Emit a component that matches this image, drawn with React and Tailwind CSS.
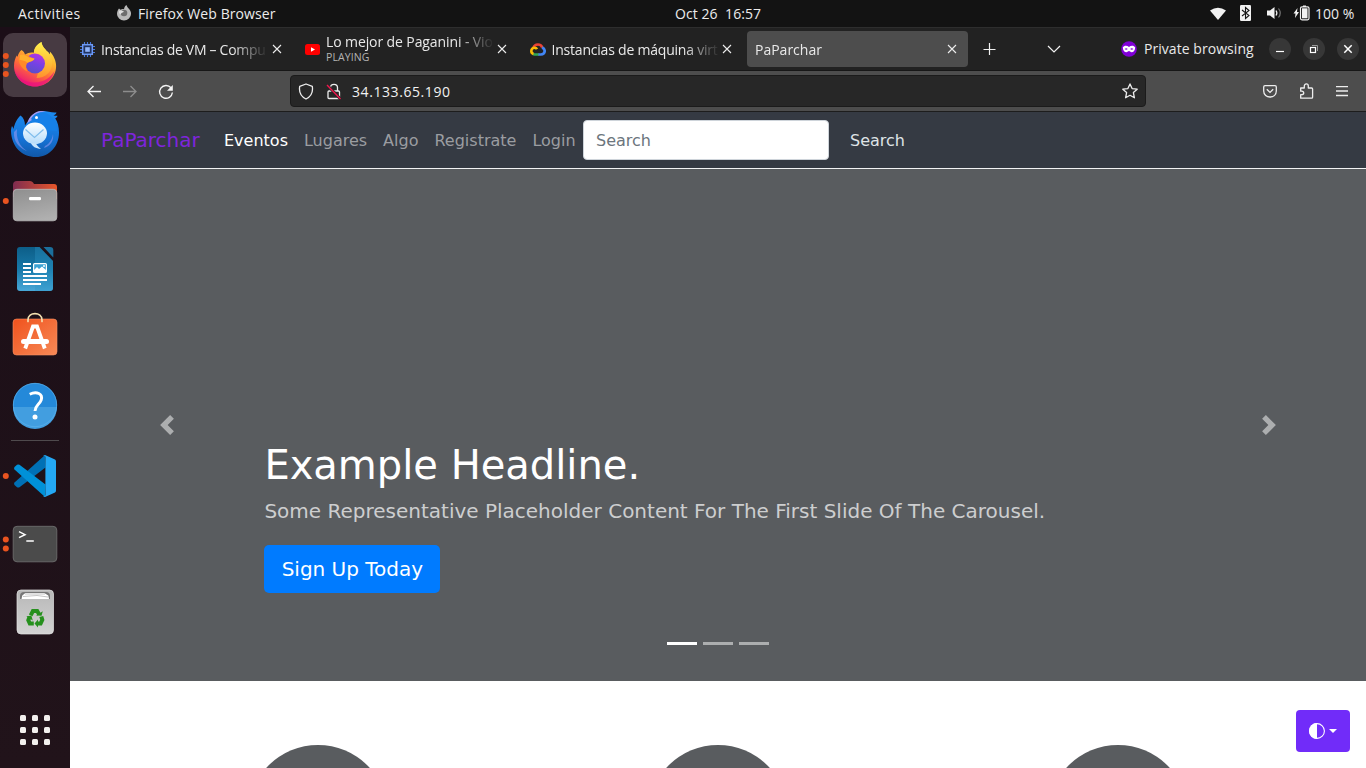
import React from "react";

const ui = "font-['Open_Sans','Noto_Sans',sans-serif]";

function Cell({ children, dots = 0 }) {
  const start = 34 - ((dots - 1) * 9) / 2;
  return (
    <svg width="70" height="68" viewBox="0 0 70 68" className="block shrink-0">
      {children}
      {Array.from({ length: dots }, (_, i) => (
        <circle key={i} cx="5.8" cy={start + i * 9} r="3" fill="#e95420" />
      ))}
    </svg>
  );
}

function FirefoxDock() {
  return (
    <Cell dots={3}>
      <defs>
        <linearGradient id="ffBody" x1="0.8" y1="0" x2="0.3" y2="1">
          <stop offset="0" stopColor="#fff44f" />
          <stop offset="0.35" stopColor="#ffb52e" />
          <stop offset="0.65" stopColor="#ff6a3a" />
          <stop offset="1" stopColor="#e90f7c" />
        </linearGradient>
        <linearGradient id="ffGlobe" x1="0.7" y1="0" x2="0.3" y2="1">
          <stop offset="0" stopColor="#b833e1" />
          <stop offset="0.5" stopColor="#7542e5" />
          <stop offset="1" stopColor="#5a4fc4" />
        </linearGradient>
        <linearGradient id="ffTail" x1="0" y1="0" x2="0" y2="1">
          <stop offset="0" stopColor="#fff44f" />
          <stop offset="1" stopColor="#ff9a2a" />
        </linearGradient>
      </defs>
      <rect x="3" y="2" width="64" height="64" rx="10" fill="#473a42" />
      <path d="M21.5 19c2 1 3 3 3.500 4.500 3-2 6-2.500 9-1.800C33.800 17 37 13.500 41.500 11c.3 4 3.500 6.500 5.500 9.500 1.300-.2 2.200 2 2.500 3 .6-1 .5-2.300.3-3 4 4 6.300 9.500 6.300 14.500 0 11.500-9.500 20.500-21 20.500S14 46.500 14 35c0-5 1.500-8.500 2.800-10.500.4.500.6 1 .7 1.500.8-3 2-5.500 4-7z" fill="url(#ffBody)" />
      <path d="M33.800 22C34 17 37 13.500 41.500 11c.3 5 5 8 8 12 4 6 3.500 14-1 19-4 4-8 5-12 5l6-20z" fill="url(#ffTail)" opacity=".85" />
      <circle cx="35" cy="32.500" r="10" fill="url(#ffGlobe)" />
      <path d="M18.500 28c2-3.500 6-5 9.500-3.500 2 2 5 2 6.500 3-1 3-5.500 3-7.500 5-1.500 2-1 5 .5 8-5-2-8.500-7-9-12.500z" fill="#ff8a28" />
      <path d="M20 24c3-1 7 .5 9 2.500l5.500 1.200c-1 2.500-5 2.800-7 4-2-2.200-5-2-8-3z" fill="#ffb02c" />
      <path d="M14.300 38c2 8 10 13.500 20 13.500S51 46 54.500 40c-2 9-10 15.500-19.500 15.500S15.500 48 14.300 38z" fill="#e8127e" opacity=".7" />
    </Cell>
  );
}

function ThunderbirdDock() {
  return (
    <Cell>
      <defs>
        <linearGradient id="tbBody" x1="0.5" y1="0" x2="0.5" y2="1">
          <stop offset="0" stopColor="#1c8bf0" />
          <stop offset="0.6" stopColor="#1573d8" />
          <stop offset="1" stopColor="#1158a8" />
        </linearGradient>
        <linearGradient id="tbMail" x1="0" y1="0" x2="0" y2="1">
          <stop offset="0" stopColor="#ffffff" />
          <stop offset="1" stopColor="#b5dcfb" />
        </linearGradient>
      </defs>
      <path d="M20.500 16.500c3 2 4.500 6 4.500 10 1-2 2-3 3-4 2-6 8-10.500 14.500-10.500 5 0 9 2 14 1.500-.5 2-2 2.500-3 2.800 1.500.6 3 .6 4 .4-.3 1.700-1.500 2.300-2.300 2.500 2.500 4 3.800 8.500 3.800 14.300C59 47.500 49 58 36 58 22 58 11.500 48 11 32c0-2 .5-4 1-5 .8 1 1.200 2 1.500 3 1-5 3.500-10.500 7-13.500z" fill="url(#tbBody)" />
      <path d="M27 25c2-8 8-12.500 14-13l5 .5c-6 .5-10 3-11.500 6-2 3-5 3-7.500 6.500z" fill="#a99bf0" />
      <path d="M31 20c3-6 10-8 15-6 7 3 11 10 11 18l-10-1-14-9z" fill="#1680e8" />
      <path d="M17 30c-1 9 2 17 10 22-8-3-14-10-13-19zM45 47c4-2 7-6 8-12 1 6-2 12-9 14z" fill="#8795ee" opacity=".65" />
      <ellipse cx="35" cy="34.300" rx="12" ry="10.800" fill="url(#tbMail)" />
      <path d="M25.500 30.500l9 8 9-8" fill="none" stroke="#80bdec" strokeWidth="1.200" />
      <path d="M31 44c1 3.500 5 5.500 10 6-2-1.500-4-3.500-5-5.500z" fill="#c9e5fc" />
      <circle cx="36.500" cy="18.500" r="1.500" fill="#fff" />
    </Cell>
  );
}

function FilesDock() {
  return (
    <Cell dots={1}>
      <defs>
        <linearGradient id="fBack" x1="0" x2="1" y1="0" y2="0">
          <stop offset="0" stopColor="#7f2c50" />
          <stop offset="1" stopColor="#e8562a" />
        </linearGradient>
        <linearGradient id="fFront" x1="0.300" x2="0.600" y1="0" y2="1">
          <stop offset="0" stopColor="#919191" />
          <stop offset="1" stopColor="#b0b0b0" />
        </linearGradient>
      </defs>
      <path d="M13 30V18q0-4 4-4h13q2 0 3 1.500l1 1.500h20q3 0 3 3v12z" fill="url(#fBack)" />
      <rect x="13.300" y="22.300" width="43.500" height="31.500" rx="3.500" fill="url(#fFront)" stroke="#bdbdbd" strokeWidth=".8" />
      <rect x="29" y="30" width="12" height="3.200" rx="1.200" fill="#fff" />
    </Cell>
  );
}

function WriterDock() {
  return (
    <Cell>
      <defs>
        <linearGradient id="wr" x1="0" x2="0" y1="0" y2="1">
          <stop offset="0" stopColor="#0d5e88" />
          <stop offset=".5" stopColor="#1778a8" />
          <stop offset="1" stopColor="#48a8d8" />
        </linearGradient>
      </defs>
      <path d="M20 12h19.500L53 26v27q0 3-3 3H20q-3 0-3-3V15q0-3 3-3z" fill="url(#wr)" />
      <path d="M35 12h4.500L53 26v27q0 3-3 3H35z" fill="#2e94c7" opacity=".35" />
      <path d="M43.500 12H50q3.300 0 3.300 3v7.500z" fill="#1b6f9c" />
      <path d="M23 29h8M23 33h8M23 37h8M23 41h24M23 45h24M23 49h18" stroke="#fff" strokeWidth="2" />
      <rect x="33.600" y="28.600" width="12.800" height="8.800" rx="1" fill="#3ba2d3" stroke="#fff" strokeWidth="1.200" />
      <path d="M34 37v-2l3-3 2 2 3-2.500 4 3.500v2z" fill="#fff" />
      <circle cx="44" cy="31" r="1" fill="#fff" />
    </Cell>
  );
}

function SoftwareDock() {
  return (
    <Cell>
      <defs>
        <linearGradient id="sw" x1="0" x2="1" y1="0" y2="1">
          <stop offset="0" stopColor="#f0521d" />
          <stop offset="1" stopColor="#f78a57" />
        </linearGradient>
      </defs>
      <rect x="13" y="16" width="44" height="36" rx="3.500" fill="url(#sw)" stroke="#f69065" strokeWidth=".6" />
      <path d="M28 18.500V17c0-8.500 14-8.500 14 0v1.500" fill="none" stroke="#f4dfaf" strokeWidth="1.700" strokeLinecap="round" />
      <path d="M25.200 45.500L33 23.500h4L44.800 45.500" fill="none" stroke="#fff" strokeWidth="3.800" />
      <rect x="21" y="36" width="28" height="5" rx="2.500" fill="#fff" />
    </Cell>
  );
}

function HelpDock() {
  return (
    <Cell>
      <circle cx="35" cy="35" r="22" fill="#2489d9" />
      <path d="M13 37h44a22 22 0 0 1-44 0z" fill="#429ee0" />
      <circle cx="35" cy="35" r="21.700" fill="none" stroke="#5cb2ed" strokeWidth=".7" />
      <path d="M29.700 24.300c7-3.500 13.500-.5 11.500 5.800-1.500 4.300-6.200 5.500-6.200 11" fill="none" stroke="#fff" strokeWidth="2.900" />
      <circle cx="35" cy="47" r="2.500" fill="#fff" />
    </Cell>
  );
}

function CodeDock() {
  return (
    <Cell dots={1}>
      <path d="M45 13L14.500 40.500q-1 1.200 0 2.400l2.500 2.300q1.200.8 2.500 0L45.500 25.500z" fill="#0070b5" />
      <path d="M45 55L14.500 27.500q-1-1.200 0-2.400l2.500-2.300q1.200-.8 2.500 0L45.500 42.500z" fill="#0091d8" />
      <path d="M45 13l10 4.500q1 .6 1 2v29q0 1.400-1 2L45 55q-1.200.3-2-.8 2.400.8 2.400-1.700v-37q0-2.500-2.400-1.700.8-1.100 2-.8z" fill="#24a8f4" />
    </Cell>
  );
}

function TerminalDock() {
  return (
    <Cell dots={2}>
      <rect x="13.200" y="16.300" width="43.600" height="35.500" rx="3.800" fill="#4b4b4b" stroke="#6d6d6d" strokeWidth=".9" />
      <path d="M19 21.700l6 3-6 3M26.300 31h7.500" fill="none" stroke="#fff" strokeWidth="1.500" />
    </Cell>
  );
}

function TrashDock() {
  return (
    <Cell>
      <defs>
        <linearGradient id="tr" x1="0" x2="0" y1="0" y2="1">
          <stop offset="0" stopColor="#b7b7b7" />
          <stop offset="1" stopColor="#d3d3d3" />
        </linearGradient>
      </defs>
      <rect x="17" y="12" width="36.500" height="44" rx="4" fill="url(#tr)" stroke="#e2e2e2" strokeWidth=".7" />
      <path d="M20 21v-3q0-4 4-4h22q4 0 4 4v3z" fill="#777" />
      <path d="M21.500 21l.8-3.500 3-2.500h19l4 2.500.7 3.500z" fill="#fff" />
      <path d="M23 18.500l14-1 11 1.500M25 16h20" fill="none" stroke="#aaa" strokeWidth=".7" />
      <g fill="none" stroke="#26901d" strokeWidth="4">
        <path d="M30.700 37.300l2.200-4.300h4.300l2 3.500" />
        <path d="M41.300 38.500l1 3.300-1.700 3.700h-3" />
        <path d="M33.800 45.500h-4l-1.500-3.300 1.300-3.500" />
      </g>
      <path d="M36 37.500l5.500.3 1.300-4.600zM38 41.500v8l-3.500-4zM26.300 38.500l5-1 1.500 5z" fill="#26901d" />
    </Cell>
  );
}

function Dock() {
  return (
    <aside className="flex h-[741px] w-[70px] shrink-0 flex-col bg-linear-to-b from-[#1b0e17] to-[#21131a] pt-1">
      <FirefoxDock />
      <ThunderbirdDock />
      <FilesDock />
      <WriterDock />
      <SoftwareDock />
      <div className="-mt-px">
        <HelpDock />
      </div>
      <div className="mx-[11px] mt-[2px] mb-[1px] h-px shrink-0 bg-[#4f4a4d]" />
      <CodeDock />
      <TerminalDock />
      <TrashDock />
      <div className="mt-[69px] ml-5 grid w-[30px] grid-cols-3 gap-[6px]">
        {Array.from({ length: 9 }, (_, i) => (
          <span key={i} className="size-[6px] rounded-[1.500px] bg-[#f2f0ee]" />
        ))}
      </div>
    </aside>
  );
}

function TopBar() {
  return (
    <header className={`${ui} flex h-[27px] shrink-0 items-center bg-[#131313] text-[14px] leading-[27px] text-[#ececec]`}>
      <span className="w-[99px] pl-[18px] tracking-[0.500px] whitespace-nowrap">Activities</span>
      <svg className="mb-[2px] ml-[17px] shrink-0" width="16" height="16" viewBox="0 0 16 16">
        <path d="M3 3.500l1.500 1.300C5.500 4 7 4 8 4.200 8.200 2.500 9 1 10.500 0c.4 2 2 3 3 4.500 1.300 2 1.700 3 1.500 4.500a7 6.500 0 0 1-14 0C1 6.500 2 4.500 3 3.500z" fill="#b9b9b9" />
        <circle cx="8" cy="8" r="3.300" fill="#6d6d6d" />
        <path d="M3 6c2-1 4 0 5 .7-1 1-3 .8-3.500 2.800L3 8z" fill="#dedede" />
      </svg>
      <span className="ml-[6px] w-[537px] text-[14px] tracking-[0.100px] whitespace-nowrap">Firefox Web Browser</span>
      <span className="w-[535px] tracking-[0.070px] whitespace-pre">Oct 26  16:57</span>
      <svg className="shrink-0" width="16" height="14" viewBox="0 0 16 14">
        <path d="M0 3.500Q8-2 16 3.500L8 13z" fill="#f2f2f2" />
      </svg>
      <svg className="mb-px ml-[14px] shrink-0" width="11" height="16" viewBox="0 0 11 16">
        <rect width="11" height="16" rx="1.200" fill="#f2f2f2" />
        <path d="M2 5l7 5.500-3.500 3V2.500L9 5.500 2 11" fill="none" stroke="#161616" strokeWidth="1.100" />
      </svg>
      <svg className="mb-px ml-[16px] shrink-0" width="16" height="14" viewBox="0 0 16 14">
        <path d="M0 4.500h3L7.500 1v12L3 9.500H0z" fill="#f2f2f2" />
        <path d="M9 4.500q1.700 2.500 0 5" fill="none" stroke="#f2f2f2" strokeWidth="1.300" />
        <path d="M11.500 2.500q3.500 4.500 0 9" fill="none" stroke="#777" strokeWidth="1.200" />
      </svg>
      <svg className="mb-px ml-[10px] shrink-0" width="17" height="16" viewBox="0 0 17 16">
        <path d="M4.500 3L.5 8.500h2L2 13l4-6H4z" fill="#f2f2f2" />
        <path d="M10 .5h3V2h-3z" fill="#f2f2f2" />
        <rect x="7.500" y="1.800" width="8.500" height="13" rx="1.500" fill="none" stroke="#f2f2f2" strokeWidth="1.200" />
        <rect x="9" y="3.300" width="5.500" height="10" fill="#f2f2f2" />
      </svg>
      <span className="ml-[5px] whitespace-nowrap">100 %</span>
    </header>
  );
}

function Close() {
  return (
    <svg className="shrink-0" width="10" height="10" viewBox="0 0 10 10">
      <path d="M1 1l8 8M9 1L1 9" stroke="#ededed" strokeWidth="1.100" />
    </svg>
  );
}

function TabTitle({ children, className = "" }) {
  return (
    <span className={`min-w-0 flex-1 whitespace-nowrap mask-[linear-gradient(to_right,black_calc(100%_-_36px),transparent)] ${className}`}>
      {children}
    </span>
  );
}

function TabBar() {
  return (
    <div className={`${ui} flex h-[44px] shrink-0 items-center border-t border-b border-t-[#2e2e2e] border-b-[#171717] bg-[#222222] text-[14px] text-[#e9e9e9]`}>
      <div className="flex w-[227px] shrink-0 items-center pr-[15px] pl-[10px]">
        <svg className="mr-[6px] shrink-0" width="15" height="15" viewBox="0 0 15 15">
          <path d="M4.500 0v15M7.500 0v15M10.500 0v15M0 4.500h15M0 7.500h15M0 10.500h15" stroke="#4a78d8" strokeWidth="1.100" />
          <rect x="2.700" y="2.700" width="9.600" height="9.600" fill="#22345e" stroke="#6d9af5" strokeWidth="1.500" />
          <rect x="5.200" y="5.200" width="4.600" height="4.600" fill="#8fb4fb" />
        </svg>
        <TabTitle className="tracking-[-0.290px]">Instancias de VM – Compu</TabTitle>
        <span className="ml-[4px]"><Close /></span>
      </div>
      <div className="flex w-[225px] shrink-0 items-center pr-[15px] pl-[8px]">
        <svg className="mr-[6px] shrink-0" width="15" height="11" viewBox="0 0 15 11">
          <rect width="15" height="11" rx="2.500" fill="#f00" />
          <path d="M6 3.300l4 2.200-4 2.200z" fill="#fff" />
        </svg>
        <div className="-mt-px flex min-w-0 flex-1 flex-col">
          <TabTitle className="-my-[3px] flex-none py-[3px] text-[14px] leading-[16px] tracking-[-0.100px]">Lo mejor de Paganini - Vio</TabTitle>
          <span className="text-[10.500px] leading-[14px] tracking-[0.100px] text-[#b4b4b4]">PLAYING</span>
        </div>
        <span className="ml-[3px]"><Close /></span>
      </div>
      <div className="flex w-[225px] shrink-0 items-center pr-[15px] pl-[8px]">
        <svg className="mr-[5.500px] shrink-0" width="16" height="13" viewBox="0 0 16 13">
          <path d="M3.500 5C4 2.500 6 1.500 8 1.500c2.300 0 3.700 1.200 4.300 3" fill="none" stroke="#ea4335" strokeWidth="2.700" />
          <path d="M12 4.500c1.700.6 2.700 2 2.700 3.500 0 2-1.600 3.500-3.700 3.500H8" fill="none" stroke="#4285f4" strokeWidth="2.700" />
          <path d="M8.500 11.500H4.500L3 11" fill="none" stroke="#34a853" strokeWidth="2.700" />
          <path d="M3.500 11C2 10.500 1.300 9.300 1.300 8c0-2 1.500-3.300 3.200-3.300 1 0 2 .5 2.500 1.500" fill="none" stroke="#fbbc05" strokeWidth="2.600" />
        </svg>
        <TabTitle className="tracking-[-0.210px]">Instancias de máquina virt</TabTitle>
        <span className="ml-[2.500px]"><Close /></span>
      </div>
      <div className="flex h-[36px] w-[221px] shrink-0 items-center rounded bg-[#4d4d4d] pr-[11px] pl-[8px]">
        <TabTitle>PaParchar</TabTitle>
        <Close />
      </div>
      <svg className="ml-[15px] shrink-0" width="14" height="14" viewBox="0 0 14 14">
        <path d="M6.500 1v12M.5 7.500h12" stroke="#f2f2f2" strokeWidth="1.200" />
      </svg>
      <svg className="ml-[50px] shrink-0" width="14" height="8" viewBox="0 0 14 8">
        <path d="M1 1l6 6 6-6" fill="none" stroke="#f2f2f2" strokeWidth="1.200" />
      </svg>
      <svg className="ml-[60px] shrink-0" width="16" height="16" viewBox="0 0 16 16">
        <circle cx="8" cy="8" r="7.800" fill="#8000d7" />
        <path d="M1.800 6.500C3 4.500 6 4.300 8 6c2-1.700 5-1.500 6.200.5-.2 3-1.600 4.700-3.600 4.700C9.500 11.200 8.700 10 8 10s-1.500 1.200-2.600 1.200c-2 0-3.400-1.700-3.600-4.700z" fill="#fff" />
        <path d="M3.600 8q1.600-1.600 3.200 0-1.600 1.500-3.200 0zM9.200 8q1.600-1.600 3.200 0-1.600 1.500-3.200 0z" fill="#8000d7" />
      </svg>
      <span className="-mt-px ml-[7px] w-[125px] shrink-0 tracking-[0.050px] whitespace-nowrap">Private browsing</span>
      <div className="flex gap-3">
        <svg width="22" height="22" viewBox="0 0 22 22"><circle cx="11" cy="11" r="11" fill="#373737" /><path d="M7 13.500h8" stroke="#fff" strokeWidth="1.200" /></svg>
        <svg width="22" height="22" viewBox="0 0 22 22"><circle cx="11" cy="11" r="11" fill="#373737" /><path d="M9 7.500h5.500V13" fill="none" stroke="#999" /><rect x="7.500" y="9.500" width="5" height="5" fill="none" stroke="#fff" strokeWidth="1.200" /></svg>
        <svg width="22" height="22" viewBox="0 0 22 22"><circle cx="11" cy="11" r="11" fill="#373737" /><path d="M7.300 7.300l7.400 7.400M14.700 7.300l-7.400 7.400" stroke="#fff" strokeWidth="1.500" /></svg>
      </div>
    </div>
  );
}

function Toolbar() {
  return (
    <div className="flex h-[41px] shrink-0 items-center border-b border-[#1d1d1d] bg-[#4d4d4d] pl-[17px]">
      <svg width="14" height="13" viewBox="0 0 14 13"><path d="M14 6.500H1M6.500 1L1 6.500 6.500 12" fill="none" stroke="#f4f4f4" strokeWidth="1.300" /></svg>
      <svg className="ml-[22px]" width="14" height="13" viewBox="0 0 14 13"><path d="M0 6.500h13M7.500 1L13 6.500 7.500 12" fill="none" stroke="#8d8d8d" strokeWidth="1.300" /></svg>
      <svg className="mt-px ml-[21px]" width="16" height="16" viewBox="0 0 16 16"><path d="M13 3.800A6.400 6.400 0 1 0 14.400 8.500" fill="none" stroke="#f4f4f4" strokeWidth="1.400" /><path d="M14.800 1v5.800H9z" fill="#f4f4f4" /></svg>
      <div className="ml-[116px] flex h-[32px] w-[856px] items-center rounded border border-[#1b1b1b] bg-[#272727] pr-[7px] pl-[7px]">
        <svg width="16" height="17" viewBox="0 0 16 17"><path d="M8 1l6.300 2.400c.8 5-1 10-6.300 12.600C2.700 13.400.9 8.400 1.700 3.400z" fill="none" stroke="#ededed" strokeWidth="1.300" strokeLinejoin="round" /></svg>
        <svg className="ml-[12px]" width="16" height="17" viewBox="0 0 16 17">
          <path d="M4.500 8V4.500c0-4.300 7-4.300 7 0V8" fill="none" stroke="#ededed" strokeWidth="1.300" />
          <rect x="2" y="8" width="11.500" height="7.500" rx="1" fill="none" stroke="#ededed" strokeWidth="1.300" />
          <path d="M1 2l13.500 14" stroke="#272727" strokeWidth="3" />
          <path d="M1 2l13.500 14" stroke="#f0164d" strokeWidth="1.400" />
        </svg>
        <span className={`${ui} mt-[2px] ml-[10px] flex-1 text-[14px] leading-5 tracking-[0.580px] text-[#f2f2f2]`}>34.133.65.190</span>
        <svg width="16" height="16" viewBox="0 0 16 16"><path d="M8 .9l2.100 4.700 5.100.6-3.800 3.400 1 5.200L8 12.300l-4.400 2.500 1-5.200L.8 6.200l5.100-.6z" fill="none" stroke="#ededed" strokeWidth="1.300" strokeLinejoin="round" /></svg>
      </div>
      <svg className="ml-[117px]" width="14" height="13" viewBox="0 0 14 13"><path d="M2 .7h10q1.300 0 1.300 1.300v4c0 8-12.600 8-12.600 0V2Q.7.700 2 .7z" fill="none" stroke="#ededed" strokeWidth="1.300" /><path d="M3.800 4.300L7 7.400l3.200-3.100" fill="none" stroke="#ededed" strokeWidth="1.400" /></svg>
      <svg className="ml-[22px]" width="15" height="16" viewBox="0 0 15 16"><path d="M1.700 5h3.600V3c0-2.800 4-2.800 4 0v2h3.300q1 0 1 1v8.300q0 .9-1 .9H1.700v-3.500h1c2.700 0 2.700-3.500 0-3.500h-1z" fill="none" stroke="#ededed" strokeWidth="1.300" strokeLinejoin="round" /></svg>
      <svg className="ml-[22px]" width="12" height="11" viewBox="0 0 12 11"><path d="M0 .5h12M0 5h12M0 9.500h12" stroke="#ededed" strokeWidth="1.300" /></svg>
    </div>
  );
}

function SiteNav() {
  return (
    <nav className="flex h-[57px] shrink-0 items-center border-b border-[#f2f3f4] bg-[#353a43] pl-[31px] text-[16px] leading-6 text-[#9b9da1]">
      <a className="w-[123px] text-[20px] leading-[30px] text-[#7f25dc]">PaParchar</a>
      <div className="flex gap-4 pt-[2px]">
        <a className="text-white">Eventos</a>
        <a>Lugares</a>
        <a>Algo</a>
        <a>Registrate</a>
        <a>Login</a>
      </div>
      <div className="ml-[7.400px] h-[40px] w-[246px] rounded border border-[#ced4da] bg-white px-3 pt-[8px] text-[#6c757d]">Search</div>
      <a className="ml-[21px] pt-[2px] text-[#dfe3e6]">Search</a>
    </nav>
  );
}

function Arrow({ d }) {
  return (
    <svg width="20" height="20" viewBox="0 0 8 8" className="shrink-0 opacity-50">
      <path d={d} fill="#fff" />
    </svg>
  );
}

function Hero() {
  return (
    <section className="flex h-[512px] shrink-0 justify-between bg-[#595c5f] px-[87px]">
      <div className="flex items-center"><Arrow d="M5.250 0l-4 4 4 4 1.500-1.500L4.250 4l2.500-2.500L5.250 0z" /></div>
      <div className="ml-[87.400px] flex flex-1 flex-col items-start pt-[272px] whitespace-nowrap">
        <h1 className="text-[40px] leading-[48px] text-white">Example Headline.</h1>
        <p className="mt-[7px] text-[20px] leading-[30px] text-[#cdcecf]">Some Representative Placeholder Content For The First Slide Of The Carousel.</p>
        <button className="mt-[19px] h-[48px] w-[176px] rounded-[5px] bg-[#007bff] text-[20px] leading-[30px] text-white">Sign Up Today</button>
        <div className="mt-[49px] ml-[402.600px] flex gap-[6px]">
          <span className="h-[3px] w-[30px] bg-white" />
          <span className="h-[3px] w-[30px] bg-[#acaeaf]" />
          <span className="h-[3px] w-[30px] bg-[#acaeaf]" />
        </div>
      </div>
      <div className="flex items-center"><Arrow d="M2.750 0L1.250 1.500 3.750 4l-2.500 2.500L2.750 8l4-4-4-4z" /></div>
    </section>
  );
}

export default function App() {
  return (
    <div className="flex h-[768px] w-[1366px] flex-col overflow-hidden">
      <TopBar />
      <div className="flex">
        <Dock />
        <main className="relative flex h-[741px] flex-1 flex-col overflow-hidden bg-white font-['DejaVu_Sans',sans-serif]">
          <TabBar />
          <Toolbar />
          <SiteNav />
          <Hero />
          <div className="flex gap-[260px] pt-[64px] pl-[178px]">
            <span className="size-[140px] shrink-0 rounded-full bg-[#595c5f]" />
            <span className="size-[140px] shrink-0 rounded-full bg-[#595c5f]" />
            <span className="size-[140px] shrink-0 rounded-full bg-[#595c5f]" />
          </div>
          <button className="absolute right-4 bottom-4 flex h-[42px] w-[54px] items-center rounded bg-[#712cf9] pl-[13px]">
            <svg width="16" height="16" viewBox="0 0 16 16"><circle cx="8" cy="8" r="7.400" fill="none" stroke="#fff" strokeWidth="1.100" /><path d="M8 0v16A8 8 0 0 1 8 0z" fill="#fff" /></svg>
            <svg className="ml-[4px]" width="8" height="4" viewBox="0 0 8 4"><path d="M0 0h8L4 4z" fill="#fff" /></svg>
          </button>
        </main>
      </div>
    </div>
  );
}
